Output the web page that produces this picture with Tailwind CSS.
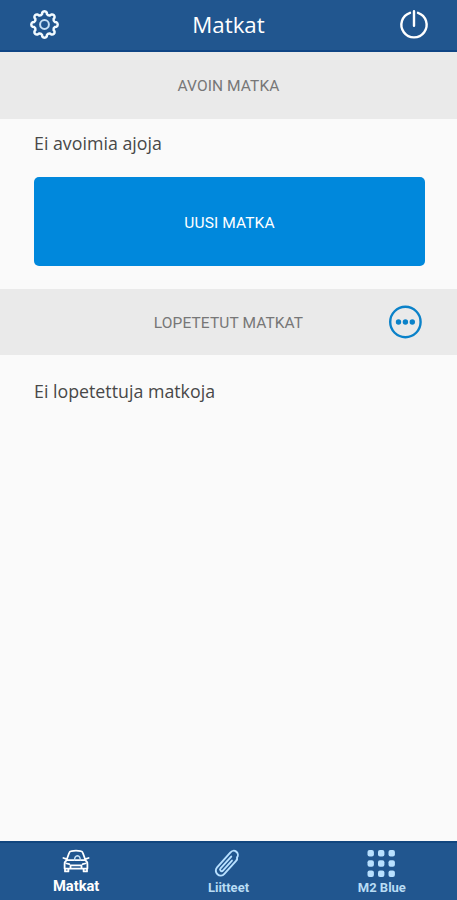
<!DOCTYPE html>
<html lang="fi">
<head>
<meta charset="utf-8">
<title>Matkat</title>
<script src="https://cdn.jsdelivr.net/npm/@tailwindcss/browser@4"></script>
</head>
<body class="bg-[#fafafa]">
<div class="flex h-[900px] w-[457px] flex-col overflow-hidden bg-[#fafafa] font-['Open_Sans',sans-serif]">
  <header class="grid h-[52px] shrink-0 grid-cols-[88px_1fr_88px] items-center border-b-2 border-[#0f4585] bg-[#21568f] text-white">
    <svg class="ml-[29px] mt-[-2px] size-[31px]" viewBox="-15.5 -15.5 31 31" fill="none" stroke="#f1faff" stroke-width="2.5" stroke-linejoin="round">
      <path d="M-2.2-12A2.6 2.6 0 0 1 2.2-12L2.5-10.3Q3.5-8.7 5.5-9.1L6.93-10.04A2.6 2.6 0 0 1 10.04-6.93L9.1-5.5Q8.7-3.5 10.3-2.5L12-2.2A2.6 2.6 0 0 1 12 2.2L10.3 2.5Q8.7 3.5 9.1 5.5L10.04 6.93A2.6 2.6 0 0 1 6.93 10.04L5.5 9.1Q3.5 8.7 2.5 10.3L2.2 12A2.6 2.6 0 0 1-2.2 12L-2.5 10.3Q-3.5 8.7-5.5 9.1L-6.93 10.04A2.6 2.6 0 0 1-10.04 6.93L-9.1 5.5Q-8.7 3.5-10.3 2.5L-12 2.2A2.6 2.6 0 0 1-12-2.2L-10.3-2.5Q-8.7-3.5-9.1-5.5L-10.04-6.93A2.6 2.6 0 0 1-6.93-10.04L-5.5-9.1Q-3.5-8.7-2.5-10.3Z"/>
      <circle r="4.4" stroke="#c7e1f5" stroke-width="2"/>
    </svg>
    <h1 class="mt-[-1px] text-center text-[22.3px] leading-8">Matkat</h1>
    <svg class="ml-[29px] mt-[-2px] size-8" viewBox="0 0 32 32" fill="none" stroke="#fff" stroke-width="2.4" stroke-linecap="round">
      <path d="M12 4.8A12.6 12.6 0 1 0 20 4.8M16 3.2V17.8"/>
    </svg>
  </header>
  <main class="flex flex-1 flex-col font-['Open_Sans',sans-serif] text-[#484848]">
    <h2 class="flex h-[67px] items-center justify-center bg-[#eaeaea] pt-[2px] font-[Roboto] text-[15.5px] text-[#777]"><span class="tracking-[0.1px]">AVOIN MATKA</span></h2>
    <div class="flex h-[170px] flex-col px-[34px] pt-[11px]">
      <p class="text-[17.8px] leading-[26px]">Ei avoimia ajoja</p>
      <button class="mt-[21px] h-[89px] w-[391px] rounded-[5px] bg-[#0088dc] pt-[5px] font-[Roboto] text-[15.5px] tracking-[0.1px] text-white">UUSI MATKA</button>
    </div>
    <div class="grid h-[66px] grid-cols-[88px_1fr_88px] items-center bg-[#eaeaea]">
      <h2 class="col-start-2 pt-[3px] text-center font-[Roboto] text-[15.5px] tracking-[0.1px] text-[#777]">LOPETETUT MATKAT</h2>
      <svg class="ml-[19px] size-[34px]" viewBox="0 0 34 34" fill="#0b82c9">
        <circle cx="17.4" cy="17" r="15.2" fill="none" stroke="#0b82c9" stroke-width="2.4"/>
        <circle cx="10.5" cy="17" r="2.7"/><circle cx="17.4" cy="17" r="2.7"/><circle cx="24.3" cy="17" r="2.7"/>
      </svg>
    </div>
    <p class="px-[34px] pt-[23px] text-[17.8px] leading-[26px]">Ei lopetettuja matkoja</p>
  </main>
  <nav class="grid h-[59px] shrink-0 grid-cols-3 border-t-2 border-[#11467f] bg-[#21568f] font-[Roboto] text-[13px] font-bold leading-4 text-[#b8dcf4]">
    <a class="flex flex-col items-center pt-[5px] text-[14.7px] text-white">
      <svg class="h-[27px] w-[30px]" viewBox="0 0 30 27" fill="none" stroke="#fff" stroke-width="1.8" stroke-linecap="round" stroke-linejoin="round">
        <path d="M5.5 12.2L8.2 4.8Q8.7 3.3 10.3 3.1Q15 2.3 19.7 3.1Q21.3 3.3 21.8 4.8L24.5 12.2Q26.5 13.7 26.4 16.3V20.6H3.6V16.3Q3.5 13.7 5.5 12.2ZM6 12.2H24M5 10.8L2.4 10M25 10.8L27.6 10M4 20.6V23.4H7.4V20.8M22.6 20.8V23.4H26V20.6M9.5 20V17.4H20.5V20M5.7 15.5L8.3 16.2M24.3 15.5L21.7 16.2"/>
        <path d="M13.5 12Q13.6 8.3 16.5 7.8Q19.2 8.3 19.3 12" stroke="#c7e1f5" stroke-width="1.4"/>
      </svg>
      <span class="mt-[3px]">Matkat</span>
    </a>
    <a class="flex flex-col items-center pt-[6px]">
      <svg class="-ml-[2px] h-[29px] w-[28px]" viewBox="-14 -14.5 28 29" fill="none" stroke="#b8e0ff" stroke-width="1.9" stroke-linecap="round">
        <path transform="rotate(42)" d="M5-8V9.5A4.9 4.9 0 0 1-4.8 9.5V-10.5A4.1 4.1 0 0 1 3.4-11.3Q5-10.2 5-8M1.7-5.5V8A1.6 1.6 0 0 1-1.5 8V-8"/>
      </svg>
      <span class="mt-[2px]">Liitteet</span>
    </a>
    <a class="flex flex-col items-center pt-[6px]">
      <svg class="h-[29px] w-[30px]" viewBox="0 0 30 29" fill="#b8e0ff">
        <rect x="1.5" y="1" width="6.4" height="6.4" rx="2"/><rect x="12" y="1" width="6.4" height="6.4" rx="2"/><rect x="22.5" y="1" width="6.4" height="6.4" rx="2"/>
        <rect x="1.5" y="11.3" width="6.4" height="6.4" rx="2"/><rect x="12" y="11.3" width="6.4" height="6.4" rx="2"/><rect x="22.5" y="11.3" width="6.4" height="6.4" rx="2"/>
        <rect x="1.5" y="21.6" width="6.4" height="6.4" rx="2"/><rect x="12" y="21.6" width="6.4" height="6.4" rx="2"/><rect x="22.5" y="21.6" width="6.4" height="6.4" rx="2"/>
      </svg>
      <span class="ml-[2px] mt-[2px]">M2 Blue</span>
    </a>
  </nav>
</div>
</body>
</html>
